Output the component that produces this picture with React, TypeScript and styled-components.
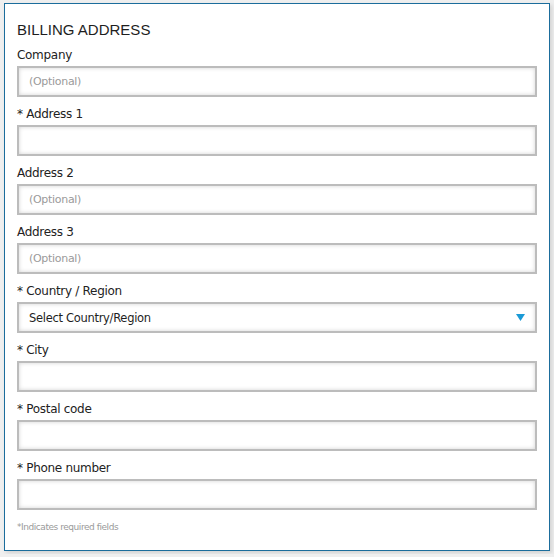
import { FC } from 'react';
import styled, { createGlobalStyle } from 'styled-components';

const GlobalStyle = createGlobalStyle`
  html, body {
    margin: 0;
    padding: 0;
    background: #efefef;
  }
  body {
    padding: 3px 4px;
    font-family: 'DejaVu Sans', Verdana, sans-serif;
  }
`;

type Field = {
  label: string;
  required?: boolean;
  optional?: boolean;
  select?: boolean;
};

const fields: Field[] = [
  { label: 'Company', optional: true },
  { label: 'Address 1', required: true },
  { label: 'Address 2', optional: true },
  { label: 'Address 3', optional: true },
  { label: 'Country / Region', required: true, select: true },
  { label: 'City', required: true },
  { label: 'Postal code', required: true },
  { label: 'Phone number', required: true },
];

const App: FC = (): JSX.Element => {
  return (
    <>
      <GlobalStyle />
      <Panel>
        <Title>BILLING ADDRESS</Title>
        {fields.map((f) => (
          <FieldRow key={f.label}>
            <Label>
              {f.required ? '* ' : ''}
              {f.label}
            </Label>
            {f.select ? (
              <SelectBox>
                <span>Select Country/Region</span>
                <Arrow viewBox='0 0 9 7'>
                  <path d='M0 0 H9 L4.5 7 Z' fill='#1a9ad6' />
                </Arrow>
              </SelectBox>
            ) : (
              <Input placeholder={f.optional ? '(Optional)' : ''} />
            )}
          </FieldRow>
        ))}
        <Note>*Indicates required fields</Note>
      </Panel>
    </>
  );
};

const Panel = styled.section`
  box-sizing: border-box;
  width: 546px;
  height: 548px;
  background: #fff;
  border: 1px solid #1b6d9c;
  box-shadow: 2px 2px 4px rgba(0, 0, 0, 0.12);
  padding: 16px 12px 0;
`;

const Title = styled.h2`
  margin: 0 0 6px;
  font-family: 'Liberation Sans', Arial, sans-serif;
  font-weight: normal;
  font-size: 15px;
  line-height: 20px;
  color: #1e1e1e;
`;

const FieldRow = styled.div`
  display: flex;
  flex-direction: column;
  gap: 2px;
  margin-bottom: 8px;
`;

const Label = styled.label`
  font-size: 12px;
  line-height: 18px;
  letter-spacing: -0.3px;
  color: #222;
`;

const boxStyle = `
  box-sizing: border-box;
  width: 520px;
  height: 31px;
  border: 2px solid #bcbcbc;
  box-shadow: inset 0 0 4px rgba(0, 0, 0, 0.18);
  background: #fff;
  padding: 0 10px;
`;

const Input = styled.input`
  ${boxStyle}
  font-family: 'DejaVu Sans', Verdana, sans-serif;
  font-size: 11px;
  letter-spacing: -0.3px;
  color: #222;
  outline: none;

  &::placeholder {
    color: #9a9a9a;
  }
`;

const SelectBox = styled.div`
  ${boxStyle}
  display: flex;
  align-items: center;
  justify-content: space-between;
  font-size: 11.5px;
  letter-spacing: -0.3px;
  color: #1e1e1e;
`;

const Arrow = styled.svg`
  width: 9px;
  height: 7px;
`;

const Note = styled.p`
  margin: 12px 0 0;
  font-size: 9px;
  letter-spacing: -0.45px;
  color: #9a9a9a;
`;

export default App;
